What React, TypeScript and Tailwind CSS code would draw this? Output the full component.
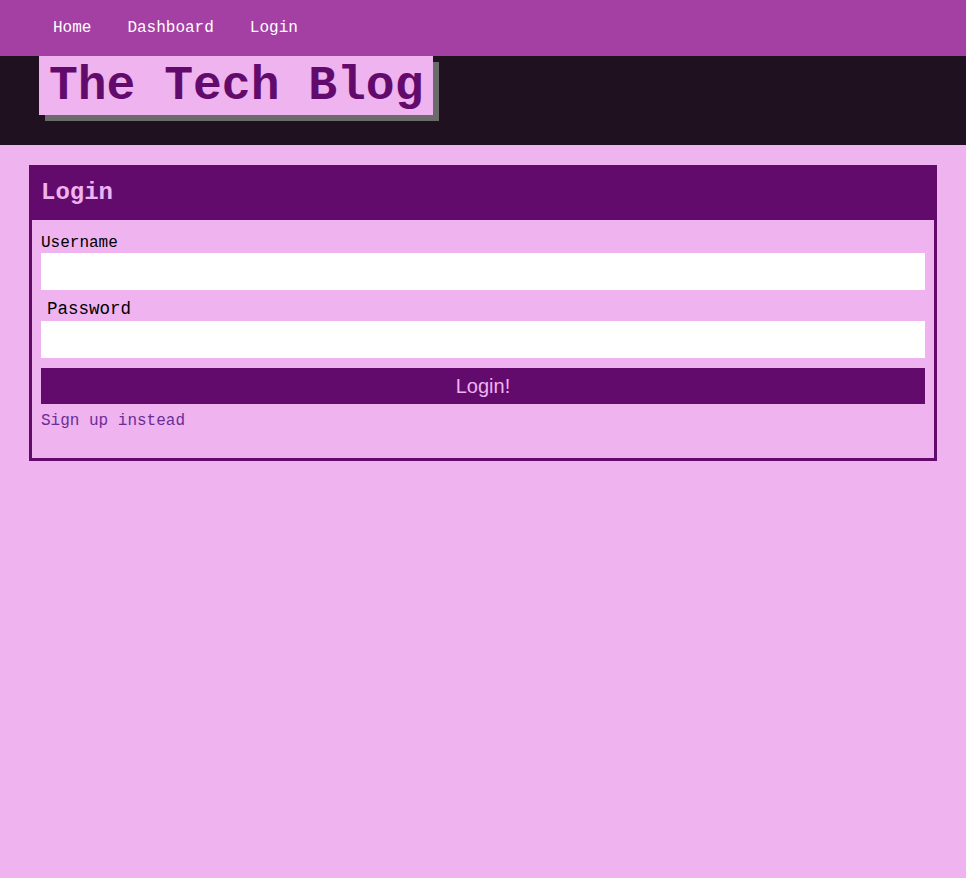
import React from 'react';

const App = () => {
  return (
    <div className="min-h-[878px] bg-[#efb3f0] font-['Liberation_Mono',monospace]">
      {/* Nav */}
      <nav className="h-[56px] bg-[#a43fa4] flex items-center pl-[35px]">
        {['Home', 'Dashboard', 'Login'].map((l) => (
          <a key={l} href="#" className="px-[18px] text-[16px] text-white leading-none">
            {l}
          </a>
        ))}
      </nav>

      {/* Header band */}
      <header className="h-[89px] bg-[#201120] pl-[39px]">
        <div className="inline-block bg-[#efb3f0] px-[10px] h-[59px] pt-[3px] shadow-[6px_6px_0_0_#6b6b6b]">
          <h1 className="text-[48px] font-bold leading-[54px] text-[#630b6d]">The Tech Blog</h1>
        </div>
      </header>

      {/* Login card */}
      <main className="px-[29px] pt-[20px]">
        <section className="border-[3px] border-[#630b6d]">
          <div className="bg-[#630b6d] -mt-[3px] -mx-[3px] h-[55px] flex items-center px-[12px] pt-[1px]">
            <h2 className="text-[24px] font-bold text-[#efb3f0] leading-none">Login</h2>
          </div>
          <form className="px-[9px] pt-[13px] pb-[28px]">
            <label className="block text-[16px] leading-[20px] text-black">Username</label>
            <input type="text" className="block w-full h-[37px] bg-white outline-none" />
            <label className="block ml-[6px] mt-[8px] text-[17.5px] leading-[23px] text-black">Password</label>
            <input type="password" className="block w-full h-[37px] bg-white outline-none" />
            <button
              type="button"
              className="block w-full h-[36px] mt-[10px] bg-[#630b6d] text-[#efb3f0] text-[20px] font-['Liberation_Sans',Arial,sans-serif]"
            >
              Login!
            </button>
            <a href="#" className="block mt-[8px] text-[16px] leading-[18px] text-[#6c2d96]">
              Sign up instead
            </a>
          </form>
        </section>
      </main>
    </div>
  );
};

export default App;
